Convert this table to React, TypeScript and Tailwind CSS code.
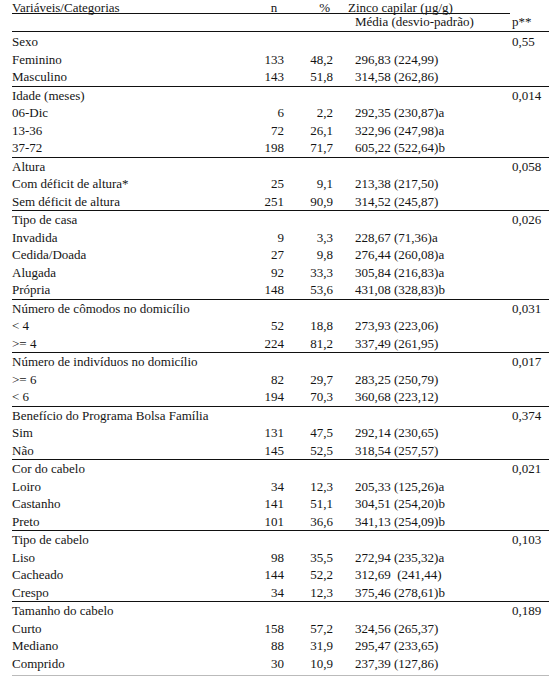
import React from "react";

type Row = [string, string, string, string];

interface Group {
  title: string;
  p: string;
  rows: Row[];
}

const GROUPS: Group[] = [
  {
    title: "Sexo",
    p: "0,55",
    rows: [
      ["Feminino", "133", "48,2", "296,83 (224,99)"],
      ["Masculino", "143", "51,8", "314,58 (262,86)"],
    ],
  },
  {
    title: "Idade (meses)",
    p: "0,014",
    rows: [
      ["06-Dic", "6", "2,2", "292,35 (230,87)a"],
      ["13-36", "72", "26,1", "322,96 (247,98)a"],
      ["37-72", "198", "71,7", "605,22 (522,64)b"],
    ],
  },
  {
    title: "Altura",
    p: "0,058",
    rows: [
      ["Com déficit de altura*", "25", "9,1", "213,38 (217,50)"],
      ["Sem déficit de altura", "251", "90,9", "314,52 (245,87)"],
    ],
  },
  {
    title: "Tipo de casa",
    p: "0,026",
    rows: [
      ["Invadida", "9", "3,3", "228,67 (71,36)a"],
      ["Cedida/Doada", "27", "9,8", "276,44 (260,08)a"],
      ["Alugada", "92", "33,3", "305,84 (216,83)a"],
      ["Própria", "148", "53,6", "431,08 (328,83)b"],
    ],
  },
  {
    title: "Número de cômodos no domicílio",
    p: "0,031",
    rows: [
      ["< 4", "52", "18,8", "273,93 (223,06)"],
      [">= 4", "224", "81,2", "337,49 (261,95)"],
    ],
  },
  {
    title: "Número de indivíduos no domicílio",
    p: "0,017",
    rows: [
      [">= 6", "82", "29,7", "283,25 (250,79)"],
      ["< 6", "194", "70,3", "360,68 (223,12)"],
    ],
  },
  {
    title: "Benefício do Programa Bolsa Família",
    p: "0,374",
    rows: [
      ["Sim", "131", "47,5", "292,14 (230,65)"],
      ["Não", "145", "52,5", "318,54 (257,57)"],
    ],
  },
  {
    title: "Cor do cabelo",
    p: "0,021",
    rows: [
      ["Loiro", "34", "12,3", "205,33 (125,26)a"],
      ["Castanho", "141", "51,1", "304,51 (254,20)b"],
      ["Preto", "101", "36,6", "341,13 (254,09)b"],
    ],
  },
  {
    title: "Tipo de cabelo",
    p: "0,103",
    rows: [
      ["Liso", "98", "35,5", "272,94 (235,32)a"],
      ["Cacheado", "144", "52,2", "312,69  (241,44)"],
      ["Crespo", "34", "12,3", "375,46 (278,61)b"],
    ],
  },
  {
    title: "Tamanho do cabelo",
    p: "0,189",
    rows: [
      ["Curto", "158", "57,2", "324,56 (265,37)"],
      ["Mediano", "88", "31,9", "295,47 (233,65)"],
      ["Comprido", "30", "10,9", "237,39 (127,86)"],
    ],
  },
];

const DataRow: React.FC<{ cells: Row; p?: string }> = ({ cells, p }) => (
  <div className="flex h-[17.5px] leading-[17.5px]">
    <span className="w-[250px] whitespace-pre">{cells[0]}</span>
    <span className="w-[24px] text-right pr-[2px]">{cells[1]}</span>
    <span className="w-[50px] text-right pr-[3px]">{cells[2]}</span>
    <span className="w-[176px] pl-[19px] whitespace-pre">{cells[3]}</span>
    <span className="w-[37px] whitespace-pre">{p ?? ""}</span>
  </div>
);

export default function App() {
  return (
    <div className="w-[557px] h-[678px] bg-white overflow-hidden text-[13px] text-[#141414] font-[family-name:'Liberation_Serif','Times_New_Roman',serif]">
      <div className="ml-[12px] w-[537px]">
        {/* header */}
        <div className="flex w-[498px] h-[14px] leading-[15px] border-b border-[#111]">
          <span className="w-[250px]">Variáveis/Categorias</span>
          <span className="w-[24px] text-center">n</span>
          <span className="w-[50px] text-right pr-[6px]">%</span>
          <span className="pl-[12px]">Zinco capilar (µg/g)</span>
        </div>
        <div className="flex h-[18px] leading-[16px] border-b border-[#111]">
          <span className="w-[343px]" />
          <span className="w-[157px]">Média (desvio-padrão)</span>
          <span>p**</span>
        </div>

        {GROUPS.map((g, i) => (
          <div key={g.title} className={i > 0 ? "border-t border-[#111]" : "pt-[1px]"}>
            <DataRow cells={[g.title, "", "", ""]} p={g.p} />
            {g.rows.map((r) => (
              <DataRow key={r[0]} cells={r} />
            ))}
          </div>
        ))}
        <div className="mt-[3px] border-t border-[#bbb]" />
      </div>
    </div>
  );
}
